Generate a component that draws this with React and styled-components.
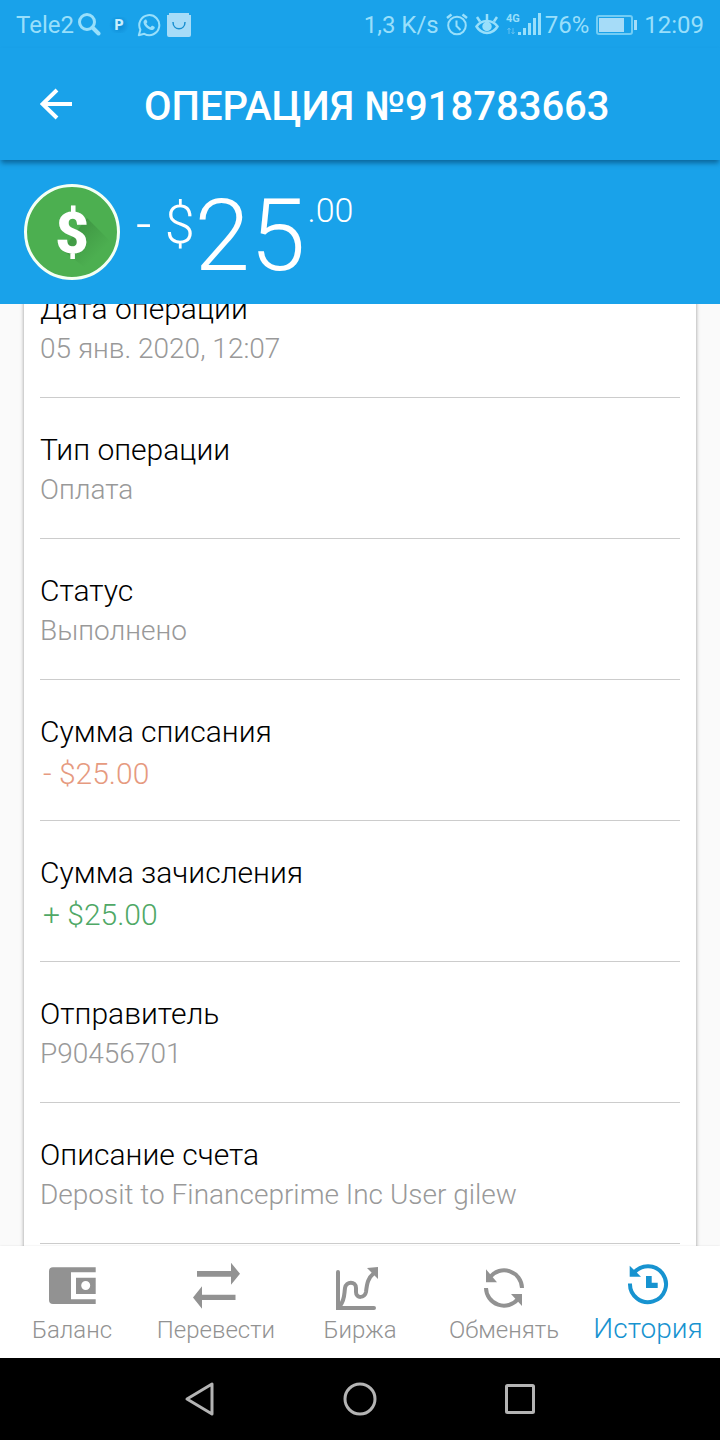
import React, { useLayoutEffect, useRef } from 'react';
import styled, { createGlobalStyle } from 'styled-components';

const GlobalStyle = createGlobalStyle`
  * {
    box-sizing: border-box;
  }

  body {
    margin: 0;
    font-family: Roboto, "Noto Sans", sans-serif;
    font-weight: 300;
    background: #fafafa;
  }

  button {
    padding: 0;
    border: 0;
    background: none;
    font: inherit;
    color: inherit;
  }

  svg {
    display: block;
    flex-shrink: 0;
  }
`;

const Screen = styled.div`
  display: flex;
  flex-direction: column;
  height: 100vh;
`;

const Header = styled.header`
  background: #19a2ea;
  color: #fff;
  flex-shrink: 0;
`;

const StatusBar = styled.div`
  display: flex;
  align-items: center;
  justify-content: space-between;
  height: 48px;
  padding: 2px 16px 0;
  font-size: 24px;
  font-weight: 400;
  color: #98dffb;
`;

const StatusGroup = styled.div`
  display: flex;
  align-items: center;
  gap: ${props => props.$gap}px;
`;

const AppBar = styled.div`
  display: flex;
  align-items: center;
  gap: 72px;
  height: 112px;
  padding: 4px 40px 0;
  box-shadow: 0 4px 5px -1px rgba(0, 60, 100, 0.6);
`;

const Title = styled.h1`
  margin: 0;
  font-size: 40px;
  font-weight: 500;
`;

const Summary = styled.section`
  display: flex;
  align-items: center;
  gap: 16px;
  height: 144px;
  padding: 0 24px;
`;

const Amount = styled.div`
  display: flex;
  align-items: flex-start;
  height: 96px;
  line-height: 104px;
  font-size: 100px;
`;

const Sign = styled.span`
  font-size: 54px;
  line-height: 82px;
`;

const Cents = styled.span`
  padding-left: 2px;
  font-size: 34px;
  line-height: 52px;
`;

const Content = styled.main`
  flex: 1;
  min-height: 0;
  padding: 0 24px;
  overflow-y: auto;
  scrollbar-width: none;
`;

const Details = styled.dl`
  margin: 0;
  padding: 0 16px 24px;
  background: #fff;
  box-shadow: 0 0 4px rgba(0, 0, 0, 0.4);
`;

const Row = styled.div`
  height: 141px;
  padding-top: 32px;
  border-bottom: 1px solid #ccc;
`;

const Label = styled.dt`
  font-size: 30px;
  line-height: 40px;
  color: #000;
`;

const Value = styled.dd`
  margin: 0;
  font-size: 28px;
  line-height: 40px;
  color: #999;
`;

const Money = styled(Value)`
  padding-left: 3px;
  font-size: 30px;
  line-height: 44px;
  color: ${props => (props.$income ? '#4fa866' : '#e69a80')};
`;

const TabBar = styled.nav`
  display: grid;
  grid-template-columns: repeat(5, 1fr);
  flex-shrink: 0;
  height: 112px;
  background: #fff;
  box-shadow: 0 0 2px rgba(0, 0, 0, 0.1);
  z-index: 1;
`;

const Tab = styled.a`
  display: flex;
  flex-direction: column;
  align-items: center;
  padding-top: ${props => (props.$active ? 14 : 16)}px;
  text-decoration: none;
  font-size: ${props => (props.$active ? 28 : 24)}px;
  line-height: ${props => (props.$active ? 42 : 40)}px;
  color: ${props => (props.$active ? '#1793d0' : '#929292')};
`;

const SystemNav = styled.div`
  display: flex;
  align-items: center;
  justify-content: center;
  gap: 120px;
  flex-shrink: 0;
  height: 82px;
  background: #000;
  color: #b4b4b4;
`;

const SearchIcon = () => (
  <svg width="24" height="24" viewBox="0 0 24 24" fill="none" stroke="currentColor">
    <circle cx="10" cy="9" r="7.5" strokeWidth="3" />
    <path d="M15.5 14.5l6 6" strokeWidth="4" strokeLinecap="round" />
  </svg>
);

const PayeerBadge = styled.span`
  width: 24px;
  text-align: center;
  font-size: 14px;
  font-weight: 900;
  color: #c8eefe;
  background: radial-gradient(circle, #108fd8 20%, #19a2ea 70%);
`;

const WhatsAppIcon = () => (
  <svg width="24" height="24" viewBox="0 0 24 24" fill="currentColor">
    <path d="M1.8 22.3l1.6-5.6A10 10 0 1 1 7.3 20.800z" fill="none" stroke="currentColor" strokeWidth="2" strokeLinejoin="round" />
    <path d="M8.300 6.500c.5-.2 1-.1 1.200.4l.8 1.900c.1.400 0 .700-.900 1.700.900 1.800 2.200 3 4 3.800l1.200-1.400c.3-.3.600-.3 1-.1l1.800.900c.5.300.4.800.2 1.500-.5 1.300-2 2-3.500 1.700C10.200 16.200 7 12.800 6.500 9.600c-.1-1.300.8-2.700 1.800-3.100z" />
  </svg>
);

const BagIcon = () => (
  <svg width="24" height="24" viewBox="0 0 24 24">
    <path d="M2 0h20v2h2v20a2 2 0 0 1-2 2H2a2 2 0 0 1-2-2V2h2z" fill="#a6dcf8" />
    <path d="M6 9c0 9 12 9 12 0" fill="none" stroke="#198fd0" strokeWidth="1.500" />
  </svg>
);

const AlarmIcon = () => (
  <svg width="22" height="24" viewBox="0 0 22 24" fill="none" stroke="currentColor" strokeWidth="2">
    <circle cx="11" cy="12.500" r="8.800" />
    <path d="M10.500 7.500V13l4 4" />
    <path d="M1 5L5.500 1.500M21 5L16.500 1.500" strokeWidth="2.500" />
  </svg>
);

const EyeIcon = () => (
  <svg width="24" height="24" viewBox="0 0 24 24" fill="none" stroke="currentColor" strokeWidth="2.500">
    <path d="M1.500 13.500c5-7.500 16-7.500 21 0-5 8.500-16 8.500-21 0z" />
    <circle cx="12" cy="13.500" r="3.500" fill="currentColor" />
    <path d="M12 7V1M5 8.500L2 4M19 8.500L22 4" />
  </svg>
);

const SignalIcon = () => (
  <svg width="35" height="24" viewBox="0 0 35 24" fill="currentColor">
    <text x="0" y="9" fontSize="11" fontWeight="700">4G</text>
    <path d="M3 15v6M1.500 17L3 15l1.500 2M7 15v6M5.500 19L7 21l1.500-2" stroke="#62bff0" fill="none" />
    <path d="M12 19h3v3h-3zM17 15h3v7h-3zM22 10h3v12h-3zM27 5h3v17h-3zM32 0h3v22h-3z" />
  </svg>
);

const BatteryIcon = () => (
  <svg width="41" height="20" viewBox="0 0 41 20" fill="currentColor">
    <rect x="1" y="1" width="35" height="18" rx="2" fill="none" stroke="#72cdf5" strokeWidth="2" />
    <path d="M3 3h25v14H3zM38 5h3v10h-3z" fill="#a6dcf8" />
  </svg>
);

const BackIcon = () => (
  <svg width="32" height="36" viewBox="0 0 32 36" fill="none" stroke="#fff" strokeWidth="4">
    <path d="M17 2L2.500 16 17 30M3 16h29" />
  </svg>
);

const DollarCoin = () => (
  <svg width="96" height="96" viewBox="0 0 96 96">
    <defs>
      <linearGradient id="coin-shadow" gradientUnits="userSpaceOnUse" x1="48" y1="48" x2="72" y2="72">
        <stop offset="0" stopColor="#3f9643" />
        <stop offset="1" stopColor="#4caf50" />
      </linearGradient>
    </defs>
    <circle cx="48" cy="48" r="46.500" fill="#4caf50" stroke="#f4fff4" strokeWidth="3" />
    <path d="M63 34L88 59A42 42 0 0 1 64 86L38 66z" fill="url(#coin-shadow)" />
    <text x="48" y="69" textAnchor="middle" fontSize="58" fontWeight="900" fill="#fff">$</text>
  </svg>
);

const WalletIcon = () => (
  <svg width="48" height="48" viewBox="0 0 48 48" fill="currentColor">
    <path d="M5 5.300h42.700v5H23v27h24.700V42H5a4 4 0 0 1-4-4V9.300a4 4 0 0 1 4-4z" />
    <path fillRule="evenodd" d="M28 15.700h19.700V32H28zM37.700 19a4.500 4.500 0 1 0 0 9 4.500 4.500 0 0 0 0-9z" />
  </svg>
);

const TransferIcon = () => (
  <svg width="48" height="48" viewBox="0 0 48 48" fill="currentColor">
    <path d="M5 9h34V.800l9 11-9 11v-8H5z" />
    <path d="M43.500 32.700H10v-8.500l-9 11.300 9 11.300V38h33.500z" />
  </svg>
);

const ChartIcon = () => (
  <svg width="48" height="48" viewBox="0 0 48 48" fill="none" stroke="currentColor" strokeWidth="4" strokeLinecap="round">
    <path d="M2 10v36h36" />
    <path d="M4 44C9 37 8 33 9 26c1-7 11-7 11 0v4c0 7 9 6 10 0 1-9 2-14 8-19" />
    <path d="M31 6l11-1v12z" fill="currentColor" stroke="none" />
  </svg>
);

const ExchangeIcon = () => (
  <svg width="48" height="48" viewBox="0 0 48 48" fill="none" stroke="currentColor" strokeWidth="4">
    <path d="M42 26A18 18 0 0 0 10 15" />
    <path d="M6 26a18 18 0 0 0 32 11" />
    <path d="M6 7.300v13h11zM42 44V32H31z" fill="currentColor" stroke="none" />
  </svg>
);

const HistoryIcon = () => (
  <svg width="48" height="48" viewBox="0 0 48 48" fill="currentColor">
    <path d="M6 23.500A18 18 0 1 0 9.500 13.500" fill="none" stroke="currentColor" strokeWidth="4" />
    <path d="M5.700 5.700v11H17z" />
    <path d="M22 16h5.700v6.700h6V28H22z" />
  </svg>
);

const details = [
  { label: 'Дата операции', value: '05 янв. 2020, 12:07' },
  { label: 'Тип операции', value: 'Оплата' },
  { label: 'Статус', value: 'Выполнено' },
  { label: 'Сумма списания', value: '- $25.00', money: true },
  { label: 'Сумма зачисления', value: '+ $25.00', money: true, income: true },
  { label: 'Отправитель', value: 'P90456701' },
  { label: 'Описание счета', value: 'Deposit to Financeprime Inc User gilew' },
];

const tabs = [
  { name: 'Баланс', icon: <WalletIcon /> },
  { name: 'Перевести', icon: <TransferIcon /> },
  { name: 'Биржа', icon: <ChartIcon /> },
  { name: 'Обменять', icon: <ExchangeIcon /> },
  { name: 'История', icon: <HistoryIcon />, active: true },
];

const App = () => {
  const content = useRef(null);

  // the list opens scrolled a little, under the header
  useLayoutEffect(() => {
    content.current.scrollTop = 47;
  }, []);

  return (
    <Screen>
      <GlobalStyle />
      <Header>
        <StatusBar>
          <StatusGroup $gap={6}>
            <StatusGroup $gap={3}>
              <span>Tele2</span>
              <SearchIcon />
            </StatusGroup>
            <PayeerBadge>P</PayeerBadge>
            <WhatsAppIcon />
            <BagIcon />
          </StatusGroup>
          <StatusGroup $gap={7}>
            <span>1,3 K/s</span>
            <AlarmIcon />
            <EyeIcon />
            <StatusGroup $gap={4}>
              <SignalIcon />
              <span>76%</span>
            </StatusGroup>
            <BatteryIcon />
            <span>12:09</span>
          </StatusGroup>
        </StatusBar>
        <AppBar>
          <button type="button" aria-label="Назад">
            <BackIcon />
          </button>
          <Title>ОПЕРАЦИЯ №918783663</Title>
        </AppBar>
        <Summary>
          <DollarCoin />
          <Amount>
            <Sign>- $</Sign>
            <span>25</span>
            <Cents>.00</Cents>
          </Amount>
        </Summary>
      </Header>
      <Content ref={content}>
        <Details>
          {details.map(item => (
            <Row key={item.label}>
              <Label>{item.label}</Label>
              {item.money
                ? <Money $income={item.income}>{item.value}</Money>
                : <Value>{item.value}</Value>}
            </Row>
          ))}
        </Details>
      </Content>
      <TabBar>
        {tabs.map(tab => (
          <Tab key={tab.name} href="#" $active={tab.active}>
            {tab.icon}
            {tab.name}
          </Tab>
        ))}
      </TabBar>
      <SystemNav>
        <button type="button" aria-label="Назад">
          <svg width="40" height="40" viewBox="0 0 40 40" fill="none" stroke="currentColor" strokeWidth="3" strokeLinejoin="round">
            <path d="M7 20L32 5v30z" />
          </svg>
        </button>
        <button type="button" aria-label="Домой">
          <svg width="40" height="40" viewBox="0 0 40 40" fill="none" stroke="currentColor" strokeWidth="3">
            <circle cx="20" cy="20" r="15" />
          </svg>
        </button>
        <button type="button" aria-label="Недавние">
          <svg width="40" height="40" viewBox="0 0 40 40" fill="none" stroke="currentColor" strokeWidth="3">
            <rect x="6.500" y="6.500" width="27" height="27" rx="1" />
          </svg>
        </button>
      </SystemNav>
    </Screen>
  );
};

export default App;
